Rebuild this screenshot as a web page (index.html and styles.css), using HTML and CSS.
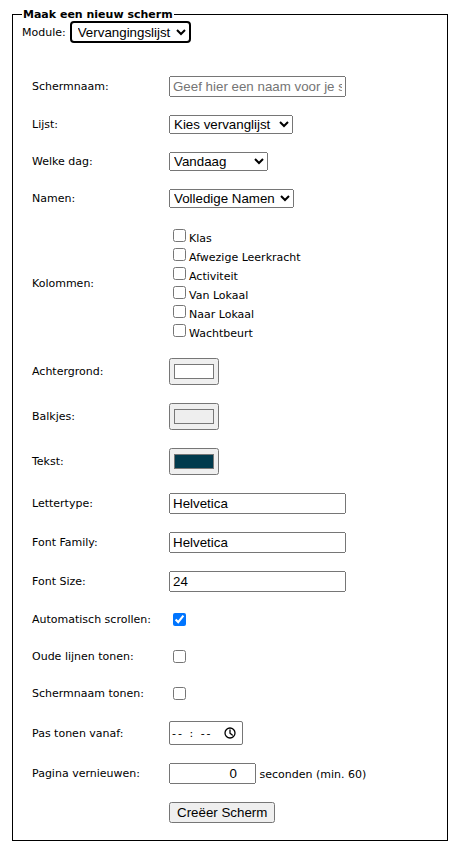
FILE: index.html
```html
<!DOCTYPE html>
<html>
<head>
<meta charset="utf-8">
<link rel="stylesheet" href="styles.css">
</head>
<body>
<form class="form">
<fieldset class="box">
<legend class="box-title">Maak een nieuw scherm</legend>
<div class="module-row">
<label class="lbl">Module:</label>
<select class="module-select"><option>Vervangingslijst</option><option>Kalender</option></select>
</div>
<table class="grid">
<tr><td class="lbl-cell">Schermnaam:</td><td><input type="text" class="txt" placeholder="Geef hier een naam voor je scherm"></td></tr>
<tr><td class="lbl-cell">Lijst:</td><td><select class="sel sel-lijst"><option>Kies vervanglijst</option></select></td></tr>
<tr><td class="lbl-cell">Welke dag:</td><td><select class="sel sel-dag"><option>Vandaag</option><option>Overmorgen</option></select></td></tr>
<tr><td class="lbl-cell">Namen:</td><td><select class="sel sel-namen"><option>Volledige Namen</option></select></td></tr>
<tr><td class="lbl-cell">Kolommen:</td><td class="cols">
<label class="col"><input type="checkbox">Klas</label><br>
<label class="col"><input type="checkbox">Afwezige Leerkracht</label><br>
<label class="col"><input type="checkbox">Activiteit</label><br>
<label class="col"><input type="checkbox">Van Lokaal</label><br>
<label class="col"><input type="checkbox">Naar Lokaal</label><br>
<label class="col"><input type="checkbox">Wachtbeurt</label>
</td></tr>
<tr><td class="lbl-cell">Achtergrond:</td><td><input type="color" value="#ffffff"></td></tr>
<tr><td class="lbl-cell">Balkjes:</td><td><input type="color" value="#eeeeee"></td></tr>
<tr><td class="lbl-cell">Tekst:</td><td><input type="color" value="#003a4d"></td></tr>
<tr><td class="lbl-cell">Lettertype:</td><td><input type="text" class="txt" value="Helvetica"></td></tr>
<tr><td class="lbl-cell">Font Family:</td><td><input type="text" class="txt" value="Helvetica"></td></tr>
<tr><td class="lbl-cell">Font Size:</td><td><input type="text" class="txt" value="24"></td></tr>
<tr><td class="lbl-cell">Automatisch scrollen:</td><td><input type="checkbox" checked></td></tr>
<tr><td class="lbl-cell">Oude lijnen tonen:</td><td><input type="checkbox"></td></tr>
<tr><td class="lbl-cell">Schermnaam tonen:</td><td><input type="checkbox"></td></tr>
<tr><td class="lbl-cell">Pas tonen vanaf:</td><td><div class="time" role="textbox" aria-label="Pas tonen vanaf"><span class="time-text">-- : --</span><svg class="clock" width="12" height="12" viewBox="0 0 12 12"><circle cx="6" cy="6" r="5" fill="none" stroke="#000" stroke-width="1.3"/><path d="M6 3 V6.2 L8.3 8" fill="none" stroke="#000" stroke-width="1.3" stroke-linecap="round" stroke-linejoin="round"/></svg></div></td></tr>
<tr><td class="lbl-cell">Pagina vernieuwen:</td><td><input type="number" class="num" value="0"> seconden (min. 60)</td></tr>
<tr><td></td><td><button type="button" class="btn">Creëer Scherm</button></td></tr>
</table>
</fieldset>
</form>
</body>
</html>
```
FILE: styles.css
```css
body {
  margin: 8px;
  font-family: "DejaVu Sans", Verdana, sans-serif;
  font-size: 11px;
  color: #000;
  background: #fff;
}
.form { margin: 0; }
.box {
  margin: 0 5px 0 4px;
  border: 1px solid #000;
  padding: 0 9px 7px 9px;
  min-width: 0;
}
.box-title {
  font-weight: bold;
  font-size: 11px;
  padding: 0 1px;
}
.module-row {
  display: flex;
  align-items: center;
  gap: 4px;
}
.module-select {
  font-family: "Liberation Sans", Arial, sans-serif;
  font-size: 13.33px;
  border: 2px solid #000;
  border-radius: 4px;
  width: 121px;
  height: 22px;
  padding: 0 0 0 2px;
  background: #fff;
  color: #000;
}
.grid {
  border-spacing: 2px;
  margin-top: 23px;
}
.grid td {
  padding: 8px;
}
.lbl-cell {
  width: 119px;
  white-space: nowrap;
}
.txt {
  width: 177px;
  box-sizing: border-box;
  font-family: "Liberation Sans", Arial, sans-serif;
  font-size: 13.33px;
}
.sel {
  font-family: "Liberation Sans", Arial, sans-serif;
  font-size: 13.33px;
}
.sel-lijst { width: 124px; }
.sel-dag { width: 99px; }
.sel-namen { width: 125px; }
.col { white-space: nowrap; }
.time {
  display: inline-flex;
  align-items: center;
  justify-content: space-between;
  width: 74px;
  height: 24px;
  box-sizing: border-box;
  border: 1px solid #767676;
  border-radius: 2px;
  padding: 0 6px 0 2px;
  background: #fff;
  vertical-align: middle;
}
.time-text {
  font-family: "DejaVu Sans", Verdana, sans-serif;
  font-size: 11px;
  letter-spacing: 2px;
  white-space: pre;
}
.clock { display: block; }
.num {
  width: 87px;
  box-sizing: border-box;
  text-align: right;
  font-family: "Liberation Sans", Arial, sans-serif;
  font-size: 13.33px;
}
.btn {
  font-family: "Liberation Sans", Arial, sans-serif;
  font-size: 13.33px;
}
```
